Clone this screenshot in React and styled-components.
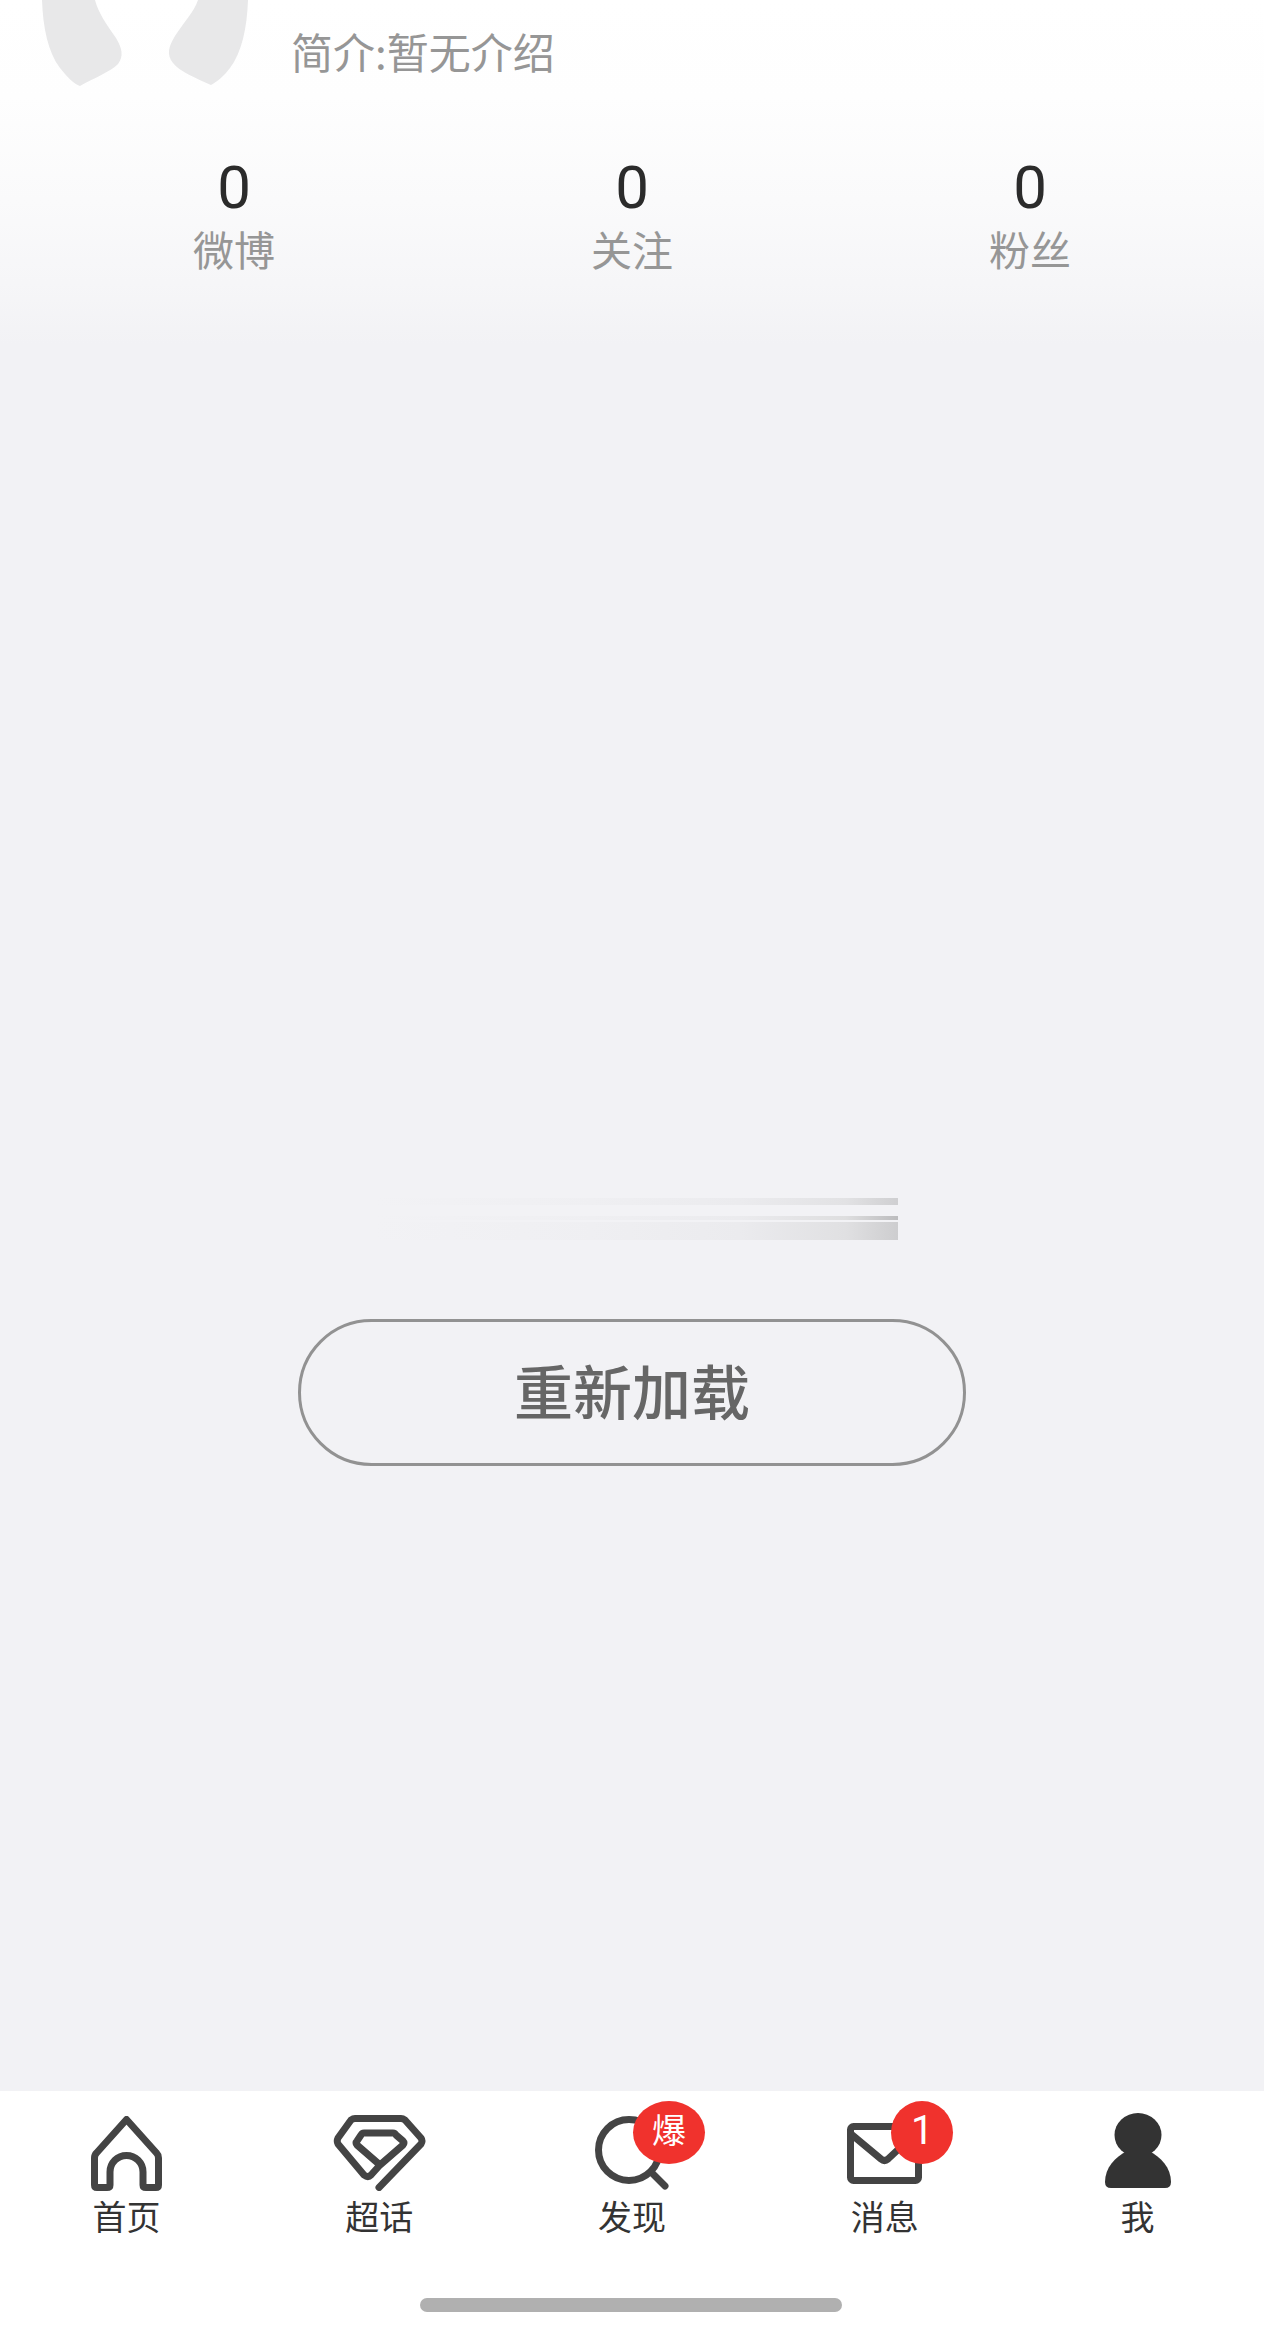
import React from "react";
import styled, { createGlobalStyle } from "styled-components";

const GlobalStyle = createGlobalStyle`
  html, body {
    margin: 0;
    padding: 0;
    background: #f2f2f5;
  }
  * {
    box-sizing: border-box;
  }
`;

const FONT = `Roboto, "Noto Sans CJK SC", sans-serif`;
const CJK = `"Noto Sans CJK SC", sans-serif`;

const Page = styled.div`
  width: 1264px;
  height: 2344px;
  display: flex;
  flex-direction: column;
  overflow: hidden;
  background: #f2f2f5;
  font-family: ${CJK};
`;

const Header = styled.header`
  height: 345px;
  flex-shrink: 0;
  background: linear-gradient(180deg, #ffffff 0%, #fefefe 28%, #fafafb 58%, #f6f6f8 82%, #f2f2f5 100%);
`;

const ProfileRow = styled.div`
  display: flex;
  height: 148px;
  padding-left: 42px;
  gap: 43px;
`;

const Intro = styled.div`
  margin-top: 22px;
  height: 58px;
  line-height: 58px;
  font-size: 42px;
  color: #969696;
  white-space: nowrap;
`;

const StatsRow = styled.div`
  display: grid;
  grid-template-columns: repeat(3, 398px);
  padding-left: 35px;
`;

const Stat = styled.div`
  display: flex;
  flex-direction: column;
  align-items: center;
`;

const StatValue = styled.div`
  font-family: ${FONT};
  font-size: 60px;
  line-height: 70px;
  margin-top: 5px;
  color: #2b2b2b;
`;

const StatLabel = styled.div`
  font-size: 41px;
  line-height: 56px;
  margin-top: -3px;
  color: #969696;
`;

const Content = styled.main`
  flex: 1;
  display: flex;
  flex-direction: column;
  align-items: center;
  padding-top: 853px;
`;

const GhostLines = styled.div`
  width: 524px;
  margin-left: 8px;
  display: flex;
  flex-direction: column;
`;

const GhostLine = styled.div`
  height: ${(p) => p.$height}px;
  margin-top: ${(p) => p.$gap}px;
  background: linear-gradient(90deg, rgba(228, 228, 231, 0) 0%, rgba(228, 228, 231, 0.2) 40%, rgba(228, 228, 231, 0.5) 70%, ${(p) => p.$mid} 90%, ${(p) => p.$end} 100%);
`;

const ReloadButton = styled.button`
  width: 668px;
  height: 147px;
  margin-top: 79px;
  border: 3px solid #929292;
  border-radius: 74px;
  background: transparent;
  font-family: ${CJK};
  font-size: 59px;
  font-weight: 500;
  line-height: 135px;
  color: #666;
  padding: 0 0 6px;
`;

const TabBar = styled.nav`
  height: 253px;
  flex-shrink: 0;
  background: #fff;
  display: flex;
  flex-direction: column;
  align-items: center;
  padding-top: 22px;
`;

const Tabs = styled.div`
  width: 100%;
  display: grid;
  grid-template-columns: repeat(5, 1fr);
`;

const Tab = styled.div`
  display: flex;
  flex-direction: column;
  align-items: center;
`;

const IconSlot = styled.div`
  position: relative;
  height: 80px;
  display: flex;
  align-items: center;
  justify-content: center;
`;

const Icon = styled.svg`
  display: block;
  fill: none;
  stroke: #444;
  stroke-width: 7;
  stroke-linecap: round;
  stroke-linejoin: round;
`;

const Badge = styled.span`
  position: absolute;
  top: -12px;
  left: ${(p) => p.$left}px;
  width: ${(p) => p.$width}px;
  height: 63px;
  border-radius: 50%;
  background: #f0322d;
  color: #fff;
  display: flex;
  align-items: center;
  justify-content: center;
  font-family: ${FONT};
  font-size: ${(p) => p.$size}px;
  line-height: 1;
  padding-bottom: 3px;
`;

const TabLabel = styled.div`
  margin-top: 3px;
  font-size: 34px;
  line-height: 40px;
  color: #333;
`;

const HomeBar = styled.div`
  width: 422px;
  height: 14px;
  margin-top: 62px;
  margin-left: -2px;
  border-radius: 7px;
  background: #b0b0b0;
`;

const stats = [
  { value: 0, label: "微博" },
  { value: 0, label: "关注" },
  { value: 0, label: "粉丝" },
];

function Avatar() {
  return (
    <svg width="206" height="90" viewBox="0 0 206 90" style={{ flexShrink: 0 }}>
      <path
        d="M0 0 C1 28 6 52 18 68 C26 78 32 84 38 86 C52 78 68 72 76 64 C82 56 80 48 74 38 C64 24 56 12 53 0 Z"
        fill="#e8e8e9"
      />
      <path
        d="M206 0 C205 28 200 52 188 68 C182 76 176 81 169 85 C154 78 138 72 131 63 C124 54 127 46 133 36 C142 22 152 12 156 0 Z"
        fill="#e8e8e9"
      />
    </svg>
  );
}

function HomeIcon() {
  return (
    <Icon width="71" height="75" viewBox="0 0 71 75">
      <path d="M35.5 3.5 L65.5 37 Q67.5 39 67.5 42 V69 Q67.5 71.5 65 71.5 H55 Q52 71.5 52 69 V56 A16.5 16.5 0 0 0 19 56 V69 Q19 71.5 16 71.5 H6 Q3.5 71.5 3.5 69 V42 Q3.5 39 5.5 37 Z" />
    </Icon>
  );
}

function TopicIcon() {
  return (
    <Icon width="93" height="76" viewBox="0 0 93 76">
      <path d="M46 72.5 L88 29 Q90 26 88 23 L72 5 Q70 3.5 68 3.5 H22 Q20 3.5 18 5 L5 23 Q3.5 26 5 29 L31 60 Q35 63 38 60 L47 50 L24 30 Q22 28 24 26 L28 20 Q29 18 31 18 H60 Q62 18 63 20 L70 26 Q72 28 70 30 L47 50" />
    </Icon>
  );
}

function SearchIcon() {
  return (
    <Icon width="74" height="74" viewBox="0 0 74 74">
      <circle cx="34" cy="34" r="30.5" />
      <path d="M56 56 L70 70" />
    </Icon>
  );
}

function MailIcon() {
  return (
    <Icon width="75" height="61" viewBox="0 0 75 61">
      <rect x="3.5" y="3.5" width="68" height="54" rx="3" />
      <path d="M4 11 L34 36 Q37.5 39 41 36 L71 8" />
    </Icon>
  );
}

function MeIcon() {
  return (
    <svg width="66" height="75" viewBox="0 0 66 75" style={{ display: "block", marginBottom: 5 }}>
      <ellipse cx="33" cy="22" rx="23.5" ry="22" fill="#333" />
      <path d="M22 38 C10 44 0 55 0 69 Q0 75 6 75 H60 Q66 75 66 69 C66 55 56 44 44 38 Z" fill="#333" />
    </svg>
  );
}

function App() {
  return (
    <Page>
      <GlobalStyle />
      <Header>
        <ProfileRow>
          <Avatar />
          <Intro>简介:暂无介绍</Intro>
        </ProfileRow>
        <StatsRow>
          {stats.map((stat) => (
            <Stat key={stat.label}>
              <StatValue>{stat.value}</StatValue>
              <StatLabel>{stat.label}</StatLabel>
            </Stat>
          ))}
        </StatsRow>
      </Header>
      <Content>
        <GhostLines>
          <GhostLine $height={7} $gap={0} $mid="#e2e2e4" $end="#cfcfd1" />
          <GhostLine $height={4} $gap={11} $mid="#dededf" $end="#bcbcbe" />
          <GhostLine $height={18} $gap={2} $mid="#e0e0e2" $end="#cdcdcf" />
        </GhostLines>
        <ReloadButton>重新加载</ReloadButton>
      </Content>
      <TabBar>
        <Tabs>
          <Tab>
            <IconSlot><HomeIcon /></IconSlot>
            <TabLabel>首页</TabLabel>
          </Tab>
          <Tab>
            <IconSlot><TopicIcon /></IconSlot>
            <TabLabel>超话</TabLabel>
          </Tab>
          <Tab>
            <IconSlot>
              <SearchIcon />
              <Badge $left={38} $width={72} $size={34}>爆</Badge>
            </IconSlot>
            <TabLabel>发现</TabLabel>
          </Tab>
          <Tab>
            <IconSlot>
              <MailIcon />
              <Badge $left={44} $width={62} $size={40}>1</Badge>
            </IconSlot>
            <TabLabel>消息</TabLabel>
          </Tab>
          <Tab>
            <IconSlot><MeIcon /></IconSlot>
            <TabLabel>我</TabLabel>
          </Tab>
        </Tabs>
        <HomeBar />
      </TabBar>
    </Page>
  );
}

export default App;
